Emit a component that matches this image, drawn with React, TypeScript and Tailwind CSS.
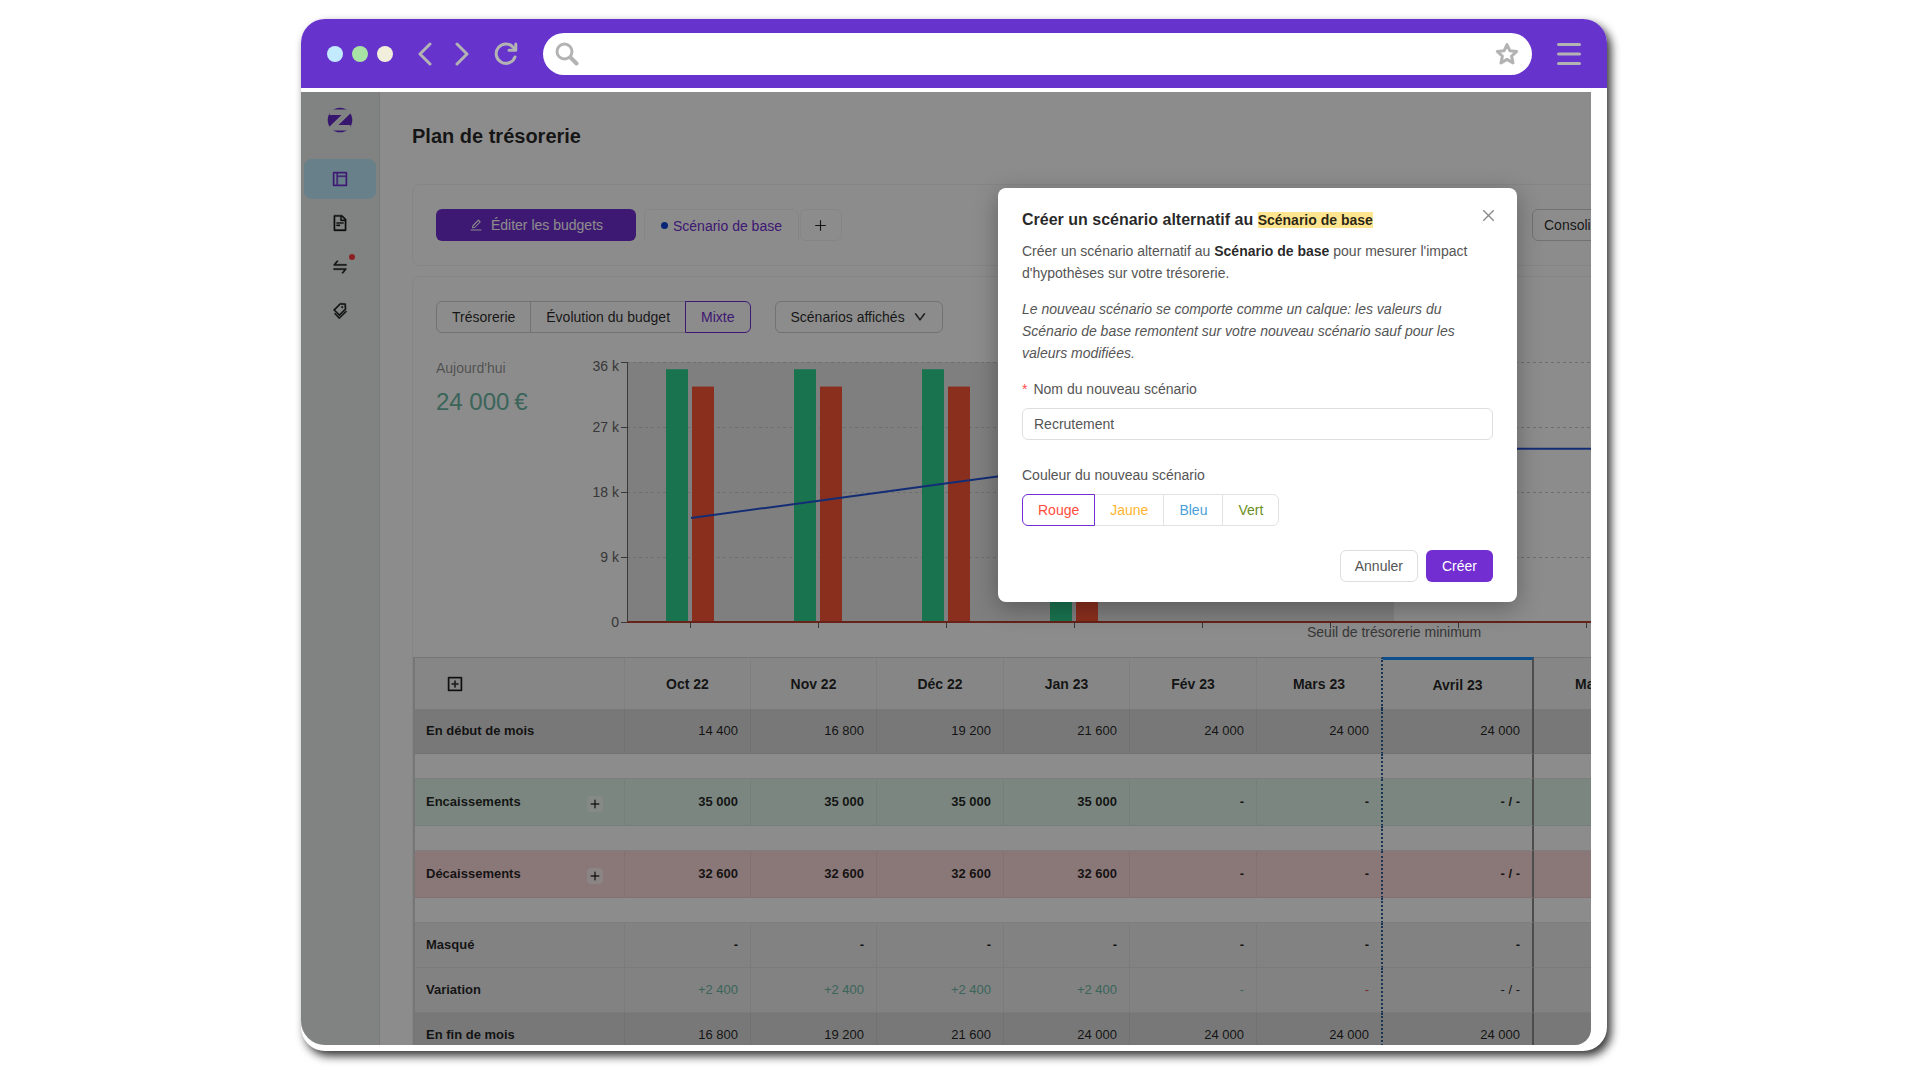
import { useState } from "react";
import type { ReactNode } from "react";
import {
  AiOutlineClose,
  AiOutlineDown,
  AiOutlineEdit,
  AiOutlineFileText,
  AiOutlineLayout,
  AiOutlinePlus,
  AiOutlinePlusSquare,
  AiOutlineSwap,
  AiOutlineTags,
} from "react-icons/ai";
import { clsx } from "clsx";

const months = [
  { label: "Oct 22", width: "w-[126px]" },
  { label: "Nov 22", width: "w-[126px]" },
  { label: "Déc 22", width: "w-[127px]" },
  { label: "Jan 23", width: "w-[126px]" },
  { label: "Fév 23", width: "w-[127px]" },
  { label: "Mars 23", width: "w-[126px]" },
  { label: "Avril 23", width: "w-[151px]" },
  { label: "Mai 23", width: "w-[126px]" },
];

type Row = {
  label: string;
  values: string[];
  rowClass: string;
  valueClass?: string;
  expandable?: boolean;
  spaceAfter?: boolean;
};

const rows: Row[] = [
  {
    label: "En début de mois",
    values: ["14 400", "16 800", "19 200", "21 600", "24 000", "24 000", "24 000", "24 000"],
    rowClass: "h-[45px] bg-[#dadada]",
    spaceAfter: true,
  },
  {
    label: "Encaissements",
    values: ["35 000", "35 000", "35 000", "35 000", "-", "-", "- / -", "-"],
    rowClass: "h-[47px] bg-[#e0f5e9]",
    valueClass: "font-bold",
    expandable: true,
    spaceAfter: true,
  },
  {
    label: "Décaissements",
    values: ["32 600", "32 600", "32 600", "32 600", "-", "-", "- / -", "-"],
    rowClass: "h-[47px] bg-[#fbdada]",
    valueClass: "font-bold",
    expandable: true,
    spaceAfter: true,
  },
  {
    label: "Masqué",
    values: ["-", "-", "-", "-", "-", "-", "-", "-"],
    rowClass: "h-[45px] bg-[#ededed]",
    valueClass: "font-bold",
  },
  {
    label: "Variation",
    values: ["+2 400", "+2 400", "+2 400", "+2 400", "-", "-", "- / -", "-"],
    rowClass: "h-[45px] bg-[#ededed]",
  },
  {
    label: "En fin de mois",
    values: ["16 800", "19 200", "21 600", "24 000", "24 000", "24 000", "24 000", "24 000"],
    rowClass: "h-[45px] bg-[#dadada]",
  },
];

const colors = [
  { value: "rouge", label: "Rouge", text: "text-[#ff4d3d]" },
  { value: "jaune", label: "Jaune", text: "text-[#ffb52e]" },
  { value: "bleu", label: "Bleu", text: "text-[#4a9fd8]" },
  { value: "vert", label: "Vert", text: "text-[#6b8e23]" },
];

const BrowserBar = () => (
  <div className="h-[69px] shrink-0 bg-[#6633cc] rounded-t-3xl px-[26px] flex items-center gap-[25px] text-[#b3b3b3]">
    <div className="flex gap-[9px]">
      <span className="size-4 rounded-full bg-[#c2ebff]" />
      <span className="size-4 rounded-full bg-[#a8e2a4]" />
      <span className="size-4 rounded-full bg-[#f1efdc]" />
    </div>
    <div className="flex items-center gap-[23px]">
      <button aria-label="Précédent">
        <svg width="14" height="24" viewBox="0 0 14 24" fill="none" stroke="currentColor" strokeWidth="3" strokeLinecap="round" strokeLinejoin="round">
          <path d="M12 2 2 12l10 10" />
        </svg>
      </button>
      <button aria-label="Suivant">
        <svg width="14" height="24" viewBox="0 0 14 24" fill="none" stroke="currentColor" strokeWidth="3" strokeLinecap="round" strokeLinejoin="round">
          <path d="m2 2 10 10L2 22" />
        </svg>
      </button>
    </div>
    <button aria-label="Actualiser">
      <svg width="24" height="24" viewBox="0 0 24 24" fill="none" stroke="currentColor" strokeWidth="3" strokeLinecap="round" strokeLinejoin="round">
        <path d="M21 15A9.7 9.7 0 1 1 19.5 5.6L21 7.6" />
        <path d="M21.8 2V8.2H15" />
      </svg>
    </button>
    <div className="flex-1 h-[42px] rounded-full bg-white flex items-center gap-3 px-3">
      <svg width="24" height="24" viewBox="0 0 24 24" fill="none" stroke="currentColor" strokeLinecap="round">
        <circle cx="9.5" cy="9.5" r="7.5" strokeWidth="3" />
        <path d="m15.5 15.5 6 6" strokeWidth="4" />
      </svg>
      <input type="text" aria-label="Adresse" className="flex-1 outline-none text-gray-700" />
      <button aria-label="Favori">
        <svg width="26" height="26" viewBox="0 0 26 26" fill="none" stroke="currentColor" strokeWidth="3" strokeLinejoin="round">
          <path d="m13 3.5 2.8 6.2 6.9.8-5.1 4.6 1.4 6.8-6-3.5-6 3.5 1.4-6.8-5.1-4.6 6.9-.8z" />
        </svg>
      </button>
    </div>
    <button aria-label="Menu">
      <svg width="24" height="24" viewBox="0 0 24 24" stroke="currentColor" strokeWidth="3" strokeLinecap="round">
        <path d="M1.5 2.5h21M1.5 12h21M1.5 21.5h21" />
      </svg>
    </button>
  </div>
);

const Logo = () => (
  <svg width="26" height="26" viewBox="0 0 26 26" fill="#6528c8">
    <clipPath id="disc">
      <circle cx="13" cy="13" r="12.3" />
    </clipPath>
    <g clipPath="url(#disc)">
      <path d="M0 0h26v2.4H0zM0 23.6h26V26H0z" />
      <path d="M0 3h2.6v5h11.9L2.6 19.5V21H0z" />
      <path d="M26 23h-2.6v-5H11.5L23.4 6.5V5H26z" />
    </g>
  </svg>
);

const navItems = [
  { label: "Plan de trésorerie", icon: AiOutlineLayout, active: true },
  { label: "Documents", icon: AiOutlineFileText },
  { label: "Transactions", icon: AiOutlineSwap, alert: true },
  { label: "Catégories", icon: AiOutlineTags },
];

const Sidebar = () => (
  <nav className="w-[79px] shrink-0 bg-[#e9eeec] border-r border-black/5 px-[3px] pt-[15px] flex flex-col items-center">
    <Logo />
    <div className="mt-[26px] w-full flex flex-col gap-1">
      {navItems.map(({ label, icon: Icon, active, alert }) => (
        <a
          key={label}
          href="#"
          aria-label={label}
          className={clsx(
            "h-10 rounded-lg flex items-center justify-center",
            active ? "bg-[#bde9fb] text-[#722ed1]" : "text-black/85"
          )}
        >
          <span className="relative">
            <Icon size={18} strokeWidth={24} />
            {alert && <span className="absolute -top-1 -right-[6px] size-[6px] rounded-full bg-[#ff3b3b]" />}
          </span>
        </a>
      ))}
    </div>
  </nav>
);

const Segment = ({ active, children }: { active?: boolean; children: ReactNode }) => (
  <button
    className={clsx(
      "h-8 px-[15px] border -ml-px first:ml-0 first:rounded-l-md last:rounded-r-md",
      active ? "border-[#722ed1] text-[#722ed1] relative" : "border-[#d0d0d0]"
    )}
  >
    {children}
  </button>
);

const TOP = 12;
const BASE = 272;
const AXIS_X = 48;
const STEP = 128;
const FIRST = 112;

const yOf = (v: number) => BASE - (v / 36000) * (BASE - TOP);

const Chart = () => {
  const ticks = [36000, 27000, 18000, 9000, 0];
  const balance = [14400, 16800, 19200, 21600, 24000, 24000, 24000, 24000, 24000];
  return (
    <svg width="1140" height="300" className="shrink-0" fontSize="14" fill="#666">
      <rect x={AXIS_X} y={TOP} width="767" height={BASE - TOP} fill="#e7e7e7" />
      {ticks.map((t) => (
        <g key={t}>
          {t > 0 && <path d={`M${AXIS_X} ${yOf(t) + 0.5}H1140`} stroke="#c8c8c8" strokeDasharray="3 3" />}
          <path d={`M${AXIS_X - 6} ${yOf(t) + 0.5}h6`} stroke="#666" />
          <text x={AXIS_X - 8} y={yOf(t) + (t === 36000 ? 9 : 5)} textAnchor="end">
            {t === 0 ? "0" : `${t / 1000} k`}
          </text>
        </g>
      ))}
      {[0, 1, 2, 3].map((i) => (
        <g key={i}>
          <rect x={FIRST - 25 + i * STEP} y={yOf(35000)} width="22" height={BASE - yOf(35000)} fill="#2fd191" />
          <rect x={FIRST + 1 + i * STEP} y={yOf(32600)} width="22" height={BASE - yOf(32600)} fill="#fb5737" />
        </g>
      ))}
      <path d={`M${AXIS_X + 0.5} ${TOP}V${BASE}`} stroke="#666" />
      {balance.map((_, i) => (
        <path key={i} d={`M${FIRST - 0.5 + i * STEP} ${BASE}v6`} stroke="#666" />
      ))}
      <path d={`M${AXIS_X} ${BASE}H1140`} stroke="#b8402f" strokeWidth="2" />
      <polyline
        points={balance.map((v, i) => `${FIRST + i * STEP},${yOf(v)}`).join(" ")}
        fill="none"
        stroke="#2453d6"
        strokeWidth="2"
      />
      <text x="728" y="287">Seuil de trésorerie minimum</text>
    </svg>
  );
};

const valueColor = (row: Row, i: number) => {
  if (row.label !== "Variation" || i > 5) return "";
  return i === 5 ? "text-[#e0504f]" : "text-[#6cb8a4]";
};

const cellBorder = (i: number) => {
  if (i === 5) return "border-r-2 border-r-[#2d5f96] [border-right-style:dotted]";
  if (i === 6) return "border-r-2 border-r-[#8c8c8c]";
  return "border-r border-r-black/5";
};

const BudgetTable = () => (
  <table className="table-fixed w-[1247px] border-separate border-spacing-0 border-l-2 border-[#d8d8d8] text-[13px]">
    <colgroup>
      <col className="w-[210px]" />
      {months.map((m) => (
        <col key={m.label} className={m.width} />
      ))}
    </colgroup>
    <thead>
      <tr className="h-[52px] bg-[#f4f4f4] text-sm">
        <th className="border-t border-t-[#d8d8d8] border-r border-r-black/5 text-left pt-px pl-[31px]">
          <button aria-label="Tout déplier" className="block">
            <AiOutlinePlusSquare size={18} strokeWidth={24} />
          </button>
        </th>
        {months.map((m, i) => (
          <th
            key={m.label}
            className={clsx(
              "pt-px",
              cellBorder(i),
              i === 6 ? "border-t-3 border-t-[#1890ff]" : "border-t border-t-[#d8d8d8]"
            )}
          >
            {m.label}
          </th>
        ))}
      </tr>
    </thead>
    <tbody>
      {rows.map((row) => [
        <tr key={row.label} className={row.rowClass}>
          <th className="border-b border-b-black/5 border-r border-r-black/5 pt-px pl-[11px] pr-[21px] text-left">
            <span className="flex items-center justify-between">
              {row.label}
              {row.expandable && (
                <button aria-label={`Déplier ${row.label}`} className="mt-[3px] size-4 rounded bg-white/60 flex items-center justify-center">
                  <AiOutlinePlus size={12} strokeWidth={24} />
                </button>
              )}
            </span>
          </th>
          {row.values.map((v, i) => (
            <td
              key={i}
              className={clsx("border-b border-b-black/5 pt-px pr-3 text-right", cellBorder(i), row.valueClass, valueColor(row, i))}
            >
              {v}
            </td>
          ))}
        </tr>,
        row.spaceAfter && (
          <tr key={`${row.label}-space`} className="h-[25px]">
            <td className="border-b border-b-black/10" />
            {months.map((m, i) => (
              <td key={m.label} className={clsx("border-b border-b-black/10", (i === 5 || i === 6) && cellBorder(i))} />
            ))}
          </tr>
        ),
      ])}
    </tbody>
  </table>
);

const ScenarioModal = () => {
  const [name, setName] = useState("Recrutement");
  const [color, setColor] = useState("rouge");

  return (
    <div
      role="dialog"
      aria-labelledby="modal-title"
      className="absolute top-24 right-[74px] w-[519px] rounded-lg bg-white px-6 py-5 text-sm leading-[22px] text-[#555] shadow-[0_6px_24px_rgba(0,0,0,0.3)]"
    >
      <button aria-label="Fermer" className="absolute top-[19px] right-5 text-[#888]">
        <AiOutlineClose size={17} />
      </button>
      <h2 id="modal-title" className="text-base leading-6 font-bold text-black/85">
        Créer un scénario alternatif au <mark className="bg-[#ffe58f] text-sm text-black/85">Scénario de base</mark>
      </h2>
      <p className="mt-2">
        Créer un scénario alternatif au <strong className="text-black/85">Scénario de base</strong> pour mesurer l'impact
        d'hypothèses sur votre trésorerie.
      </p>
      <p className="mt-[14px] italic">
        Le nouveau scénario se comporte comme un calque: les valeurs du Scénario de base remontent sur votre nouveau
        scénario sauf pour les valeurs modifiées.
      </p>
      <label htmlFor="scenario-name" className="mt-[14px] flex gap-[6px]">
        <span className="text-[#ff4d4f]">*</span>
        Nom du nouveau scénario
      </label>
      <input
        id="scenario-name"
        type="text"
        value={name}
        onChange={(e) => setName(e.target.value)}
        className="mt-2 block h-8 w-full rounded-md border border-[#dedede] px-[11px] outline-none"
      />
      <fieldset className="mt-6">
        <legend>Couleur du nouveau scénario</legend>
        <div className="mt-2 flex">
          {colors.map((c) => (
            <label
              key={c.value}
              className={clsx(
                "h-8 px-[15px] border -ml-px first:ml-0 first:rounded-l-md last:rounded-r-md flex items-center cursor-pointer",
                c.text,
                color === c.value ? "border-[#722ed1] relative" : "border-[#e2e2e2]"
              )}
            >
              <input
                type="radio"
                name="scenario-color"
                value={c.value}
                checked={color === c.value}
                onChange={() => setColor(c.value)}
                className="sr-only"
              />
              {c.label}
            </label>
          ))}
        </div>
      </fieldset>
      <div className="mt-6 flex justify-end gap-2">
        <button className="h-8 px-[14px] rounded-md border border-[#dedede]">Annuler</button>
        <button className="h-8 px-4 rounded-md bg-[#722ed1] text-white">Créer</button>
      </div>
    </div>
  );
};

export default function App() {
  return (
    <div className="h-screen bg-white pt-[19px] pb-[27px] pl-[301px] pr-[313px] font-['Liberation_Sans',Arial,sans-serif]">
      <div className="h-full flex flex-col rounded-3xl bg-white shadow-[4px_5px_10px_rgba(0,0,0,0.8)]">
        <BrowserBar />
        <div className="relative flex flex-1 min-h-0 mt-1 mr-4 mb-[6px] overflow-hidden rounded-bl-3xl rounded-br-2xl">
          <Sidebar />
          <main className="flex-1 min-w-0 pl-8 pt-[30px] text-sm text-black/85">
            <h1 className="text-xl leading-7 font-bold">Plan de trésorerie</h1>

            <section className="mt-[34px] -mr-14 py-6 pl-[23px] pr-6 rounded-lg border border-black/5 flex items-center">
              <button className="h-8 w-[200px] rounded-md bg-[#722ed1] text-white flex items-center justify-center gap-2">
                <AiOutlineEdit size={14} />
                Éditer les budgets
              </button>
              <button className="ml-2 h-8 px-4 rounded-t-md border border-b-0 border-black/5 text-[#722ed1] flex items-center gap-[5px]">
                <span className="size-[7px] rounded-full bg-[#1146d8]" />
                Scénario de base
              </button>
              <button aria-label="Ajouter un scénario" className="ml-px h-8 w-[42px] rounded-md border border-black/5 flex items-center justify-center">
                <AiOutlinePlus size={15} />
              </button>
              <button className="ml-auto h-8 w-[90px] rounded-md border border-[#d0d0d0] px-[11px] text-left">Consolidé</button>
            </section>

            <section className="mt-[10px] -mr-14 rounded-t-lg border border-black/5">
              <div className="pl-[23px] pt-6 flex gap-6">
                <div className="flex">
                  <Segment>Trésorerie</Segment>
                  <Segment>Évolution du budget</Segment>
                  <Segment active>Mixte</Segment>
                </div>
                <button className="h-8 px-[15px] rounded-md border border-[#d0d0d0] flex items-center gap-2">
                  Scénarios affichés
                  <AiOutlineDown size={14} strokeWidth={24} />
                </button>
              </div>
              <div className="mt-[17px] pl-[23px] pb-[7px] flex overflow-hidden">
                <div className="w-[143px] shrink-0 pt-[7px]">
                  <p className="leading-[22px] text-black/45">Aujourd'hui</p>
                  <p className="mt-[7px] text-2xl leading-8 text-[#6cb8a4]">24 000&#8239;€</p>
                </div>
                <Chart />
              </div>
              <BudgetTable />
            </section>
          </main>
          <div className="absolute inset-0 bg-black/45" />
          <ScenarioModal />
        </div>
      </div>
    </div>
  );
}
